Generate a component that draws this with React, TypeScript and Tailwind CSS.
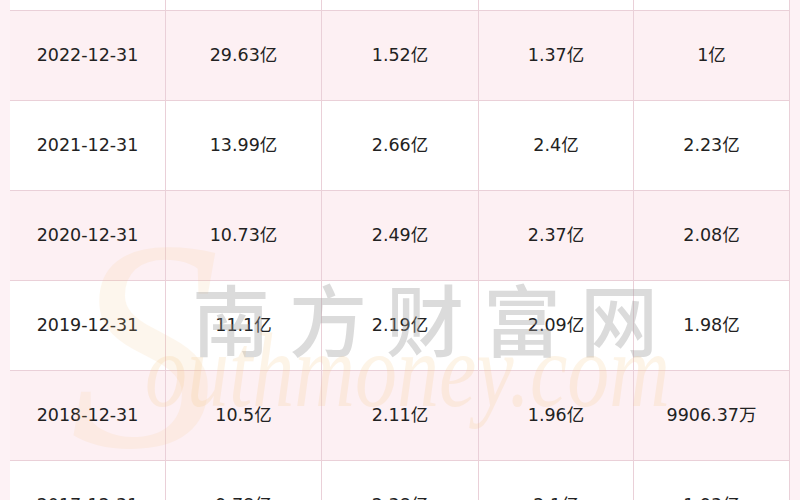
const ROWS = [
  ["2022-12-31", "29.63亿", "1.52亿", "1.37亿", "1亿"],
  ["2021-12-31", "13.99亿", "2.66亿", "2.4亿", "2.23亿"],
  ["2020-12-31", "10.73亿", "2.49亿", "2.37亿", "2.08亿"],
  ["2019-12-31", "11.1亿", "2.19亿", "2.09亿", "1.98亿"],
  ["2018-12-31", "10.5亿", "2.11亿", "1.96亿", "9906.37万"],
  ["2017-12-31", "9.78亿", "2.38亿", "2.1亿", "1.93亿"],
]

const COLS = "grid grid-cols-[155px_156px_157px_155px_156px]"

export default function App() {
  return (
    <div className="relative h-[500px] w-[800px] overflow-hidden bg-[#fdf2f5] font-['DejaVu_Sans','Noto_Sans_CJK_SC',sans-serif] text-[17.5px] text-[#222]">
      <div className="ml-[10px] w-[780px] border-r border-[#ead0d8]">
        <div className={`${COLS} h-[10px] bg-white`}>
          {[0, 1, 2, 3, 4].map((i) => (
            <div key={i} className={i > 0 ? "border-l border-[#ead0d8]" : ""} />
          ))}
        </div>
        {ROWS.map((row, r) => (
          <div
            key={row[0]}
            className={`${COLS} h-[90px] border-t border-[#ead0d8] ${r % 2 === 0 ? "bg-[#fdf0f3]" : "bg-white"}`}
          >
            {row.map((cell, i) => (
              <div
                key={i}
                className={`flex items-center justify-center ${i > 0 ? "border-l border-[#ead0d8]" : ""}`}
              >
                {cell}
              </div>
            ))}
          </div>
        ))}
      </div>

      {/* watermark */}
      <div className="pointer-events-none absolute left-[70px] top-[195px] font-['Liberation_Serif',serif] text-[300px] italic leading-none text-[#f7c98a] opacity-15">
        S
      </div>
      <div className="pointer-events-none absolute left-[192px] top-[278px] whitespace-nowrap font-['Noto_Sans_CJK_SC',sans-serif] text-[78px] font-medium leading-none tracking-[19px] text-[#9a9a9a] opacity-35">
        南方财富网
      </div>
      <div className="pointer-events-none absolute left-[145px] top-[318px] origin-left scale-x-[0.8] whitespace-nowrap font-['Liberation_Serif',serif] text-[105px] italic leading-none text-[#f7c98a] opacity-20">
        outhmoney.com
      </div>
    </div>
  )
}
